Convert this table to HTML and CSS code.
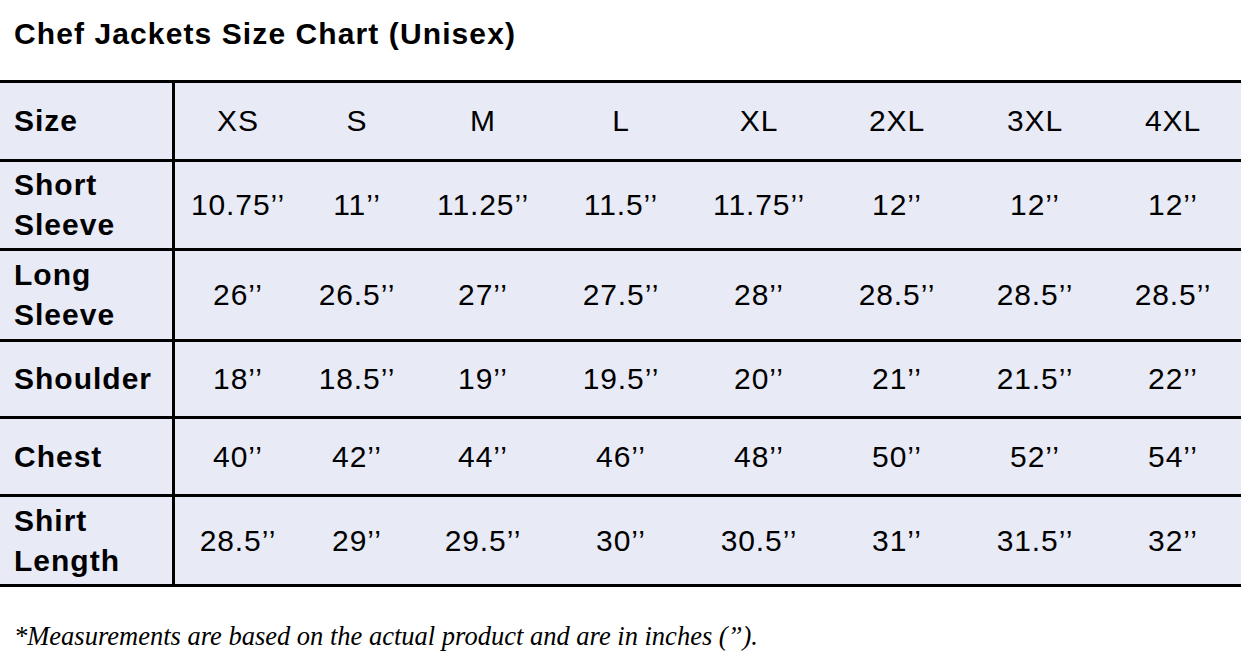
FILE: index.html
```html
<!DOCTYPE html>
<html lang="en">
<head>
<meta charset="utf-8">
<title>Chef Jackets Size Chart (Unisex)</title>
<link rel="stylesheet" href="styles.css">
</head>
<body>
<div class="page">
  <h1 class="title">Chef Jackets Size Chart (Unisex)</h1>
  <div class="chart">
    <div class="cell label r-head">Size</div>
    <div class="cell r-head">XS</div>
    <div class="cell r-head">S</div>
    <div class="cell r-head">M</div>
    <div class="cell r-head">L</div>
    <div class="cell r-head">XL</div>
    <div class="cell r-head">2XL</div>
    <div class="cell r-head">3XL</div>
    <div class="cell r-head">4XL</div>

    <div class="cell label">Short<br>Sleeve</div>
    <div class="cell">10.75’’</div>
    <div class="cell">11’’</div>
    <div class="cell">11.25’’</div>
    <div class="cell">11.5’’</div>
    <div class="cell">11.75’’</div>
    <div class="cell">12’’</div>
    <div class="cell">12’’</div>
    <div class="cell">12’’</div>

    <div class="cell label">Long<br>Sleeve</div>
    <div class="cell">26’’</div>
    <div class="cell">26.5’’</div>
    <div class="cell">27’’</div>
    <div class="cell">27.5’’</div>
    <div class="cell">28’’</div>
    <div class="cell">28.5’’</div>
    <div class="cell">28.5’’</div>
    <div class="cell">28.5’’</div>

    <div class="cell label">Shoulder</div>
    <div class="cell">18’’</div>
    <div class="cell">18.5’’</div>
    <div class="cell">19’’</div>
    <div class="cell">19.5’’</div>
    <div class="cell">20’’</div>
    <div class="cell">21’’</div>
    <div class="cell">21.5’’</div>
    <div class="cell">22’’</div>

    <div class="cell label">Chest</div>
    <div class="cell">40’’</div>
    <div class="cell">42’’</div>
    <div class="cell">44’’</div>
    <div class="cell">46’’</div>
    <div class="cell">48’’</div>
    <div class="cell">50’’</div>
    <div class="cell">52’’</div>
    <div class="cell">54’’</div>

    <div class="cell label">Shirt<br>Length</div>
    <div class="cell">28.5’’</div>
    <div class="cell">29’’</div>
    <div class="cell">29.5’’</div>
    <div class="cell">30’’</div>
    <div class="cell">30.5’’</div>
    <div class="cell">31’’</div>
    <div class="cell">31.5’’</div>
    <div class="cell">32’’</div>
  </div>
  <p class="note">*Measurements are based on the actual product and are in inches (”).</p>
</div>
</body>
</html>
```

FILE: styles.css
```css
html, body {
  margin: 0;
  padding: 0;
  background: #ffffff;
}

.page {
  display: flex;
  flex-direction: column;
  width: 1247px;
  font-family: "Liberation Sans", Arial, sans-serif;
  color: #000;
}

.title {
  margin: 17px 0 0 0;
  padding-left: 14px;
  font-size: 30px;
  line-height: 34px;
  font-weight: 700;
  letter-spacing: 1.1px;
}

.chart {
  margin-top: 29px;
  width: 1241px;
  display: grid;
  grid-template-columns: 175px 124px 114px 138px repeat(5, 138px);
  grid-template-rows: 79px 89px 91px 77px 78px 90px;
  background: #e8eaf6;
  border-top: 3px solid #000;
}

.cell {
  box-sizing: border-box;
  display: flex;
  align-items: center;
  justify-content: center;
  text-align: center;
  border-bottom: 3px solid #000;
  font-size: 30px;
  line-height: 40px;
  letter-spacing: 0.9px;
  padding-left: 2px;
}

.label {
  justify-content: flex-start;
  text-align: left;
  padding-left: 14px;
  font-weight: 700;
  letter-spacing: 1px;
  border-right: 3px solid #000;
}

.note {
  margin: 34px 0 0 0;
  padding-left: 14px;
  font-family: "Liberation Serif", "Times New Roman", serif;
  font-style: italic;
  font-size: 26.5px;
  line-height: 30px;
}
```
